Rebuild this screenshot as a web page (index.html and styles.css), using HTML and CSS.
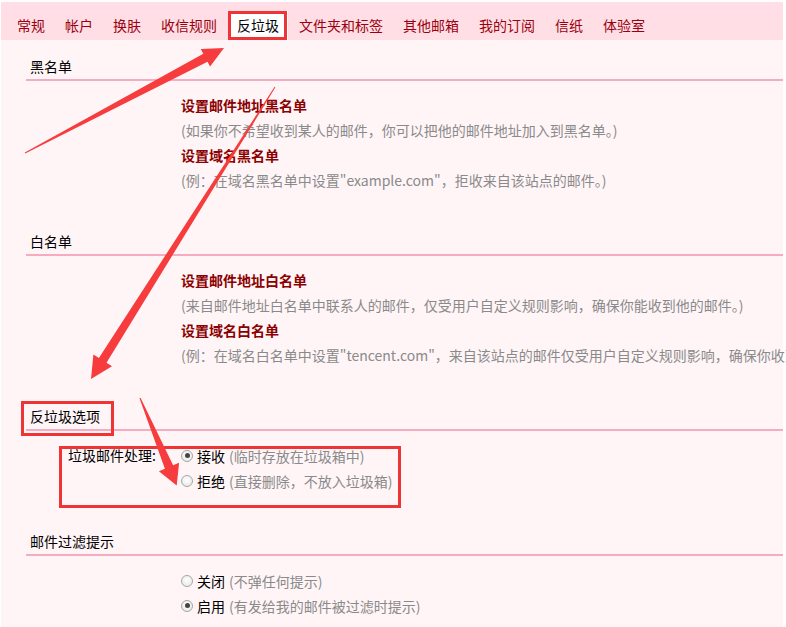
FILE: index.html
```html
<!DOCTYPE html>
<html lang="zh-CN">
<head>
<meta charset="utf-8">
<title>设置 - 反垃圾</title>
<link rel="stylesheet" href="styles.css">
</head>
<body>
<div class="page">
  <nav class="tabs">
    <a class="tab">常规</a>
    <a class="tab">帐户</a>
    <a class="tab">换肤</a>
    <a class="tab">收信规则</a>
    <a class="tab active">反垃圾</a>
    <a class="tab">文件夹和标签</a>
    <a class="tab">其他邮箱</a>
    <a class="tab">我的订阅</a>
    <a class="tab">信纸</a>
    <a class="tab">体验室</a>
  </nav>

  <main class="content">
    <section class="section">
      <h2 class="sec-title">黑名单</h2>
      <ul class="rows">
        <li><a class="link">设置邮件地址黑名单</a></li>
        <li class="desc">(如果你不希望收到某人的邮件，你可以把他的邮件地址加入到黑名单。)</li>
        <li><a class="link">设置域名黑名单</a></li>
        <li class="desc">(例：在域名黑名单中设置"example.com"，拒收来自该站点的邮件。)</li>
      </ul>
    </section>

    <section class="section">
      <h2 class="sec-title">白名单</h2>
      <ul class="rows">
        <li><a class="link">设置邮件地址白名单</a></li>
        <li class="desc">(来自邮件地址白名单中联系人的邮件，仅受用户自定义规则影响，确保你能收到他的邮件。)</li>
        <li><a class="link">设置域名白名单</a></li>
        <li class="desc">(例：在域名白名单中设置"tencent.com"，来自该站点的邮件仅受用户自定义规则影响，确保你收到该站点的邮件。)</li>
      </ul>
    </section>

    <section class="section">
      <h2 class="sec-title">反垃圾选项</h2>
      <div class="opt-grid">
        <div class="opt-label">垃圾邮件处理:</div>
        <div class="opt-list">
          <label class="radio"><span class="dot on"></span>接收<span class="note">(临时存放在垃圾箱中)</span></label>
          <label class="radio"><span class="dot"></span>拒绝<span class="note">(直接删除，不放入垃圾箱)</span></label>
        </div>
      </div>
    </section>

    <section class="section">
      <h2 class="sec-title">邮件过滤提示</h2>
      <div class="opt-grid">
        <div class="opt-label"></div>
        <div class="opt-list">
          <label class="radio"><span class="dot"></span>关闭<span class="note">(不弹任何提示)</span></label>
          <label class="radio"><span class="dot on"></span>启用<span class="note">(有发给我的邮件被过滤时提示)</span></label>
        </div>
      </div>
    </section>
  </main>

  <svg class="marks" width="786" height="627" viewBox="0 0 786 627" aria-hidden="true">
    <rect x="229.5" y="12.5" width="56" height="26" fill="none" stroke="#ee3434" stroke-width="3"/>
    <rect x="22.5" y="402.5" width="90" height="32" fill="none" stroke="#ee3434" stroke-width="3"/>
    <rect x="60.5" y="447.5" width="339" height="59" fill="none" stroke="#ee3434" stroke-width="3"/>
    <polygon fill="#f63c3c" points="24.8,152.6 203.3,53.8 200.7,48.9 224,48 210.1,66.6 207.5,61.8 25.2,153.4"/>
    <polygon fill="#f63c3c" points="274.6,86.7 98.9,358.0 93.4,354.5 91,379 112.0,366.3 106.5,362.8 275.4,87.3"/>
    <polygon fill="#f63c3c" points="139.5,398.2 164.9,468.7 158.9,471.3 176.7,485.4 179.1,462.7 173.1,465.3 140.5,397.8"/>
  </svg>
</div>
</body>
</html>
```

FILE: styles.css
```css
* { box-sizing: border-box; }

html, body {
  margin: 0;
  padding: 0;
  background: #ffffff;
}

body {
  font-family: "Noto Sans CJK SC", "Noto Sans", sans-serif;
  font-size: 14px;
  color: #000;
}

.page {
  position: relative;
  width: 786px;
  height: 627px;
  overflow: hidden;
  padding: 2px 3px 0 1px;
}

.tabs {
  display: flex;
  gap: 2px;
  height: 38px;
  padding: 9px 0 0 7px;
  background: #ffdfe5;
}

.tab {
  display: block;
  height: 29px;
  line-height: 23px;
  padding: 0 6px;
  border: 3px solid transparent;
  border-bottom: 0;
  color: #9c0010;
  white-space: nowrap;
  cursor: pointer;
}

.tab.active {
  background: #ffffff;
  color: #000;
}

.content {
  background: #fff5f7;
  height: 587px;
  padding-left: 25px;
}

.section {
  padding-bottom: 22px;
}

.sec-title {
  margin: 0;
  padding: 16px 0 3px 4px;
  font-size: 14px;
  line-height: 20px;
  font-weight: normal;
  border-bottom: 2px solid #f5abc0;
}

.rows {
  list-style: none;
  margin: 12px 0 0;
  padding: 0 0 0 155px;
  white-space: nowrap;
}

.rows li {
  height: 25px;
  line-height: 25px;
}

.link {
  color: #8b0000;
  font-weight: bold;
  cursor: pointer;
}

.desc {
  color: #8a8a8a;
}

.opt-grid {
  display: grid;
  grid-template-columns: 155px auto;
  margin-top: 12px;
}

.opt-label {
  padding-left: 42px;
  line-height: 25px;
  white-space: nowrap;
}

.opt-list {
  display: flex;
  flex-direction: column;
}

.radio {
  display: flex;
  align-items: center;
  height: 25px;
  white-space: nowrap;
}

.dot {
  width: 12px;
  height: 12px;
  margin-right: 4px;
  border-radius: 50%;
  border: 1px solid #a6a6a6;
  background: radial-gradient(circle at 50% 40%, #ffffff 0%, #e4e4e4 100%);
  position: relative;
}

.dot.on::after {
  content: "";
  position: absolute;
  left: 2.5px;
  top: 2.5px;
  width: 5px;
  height: 5px;
  border-radius: 50%;
  background: #444;
}

.note {
  color: #8a8a8a;
  margin-left: 4px;
}

.marks {
  position: absolute;
  left: 0;
  top: 0;
  pointer-events: none;
}
```
